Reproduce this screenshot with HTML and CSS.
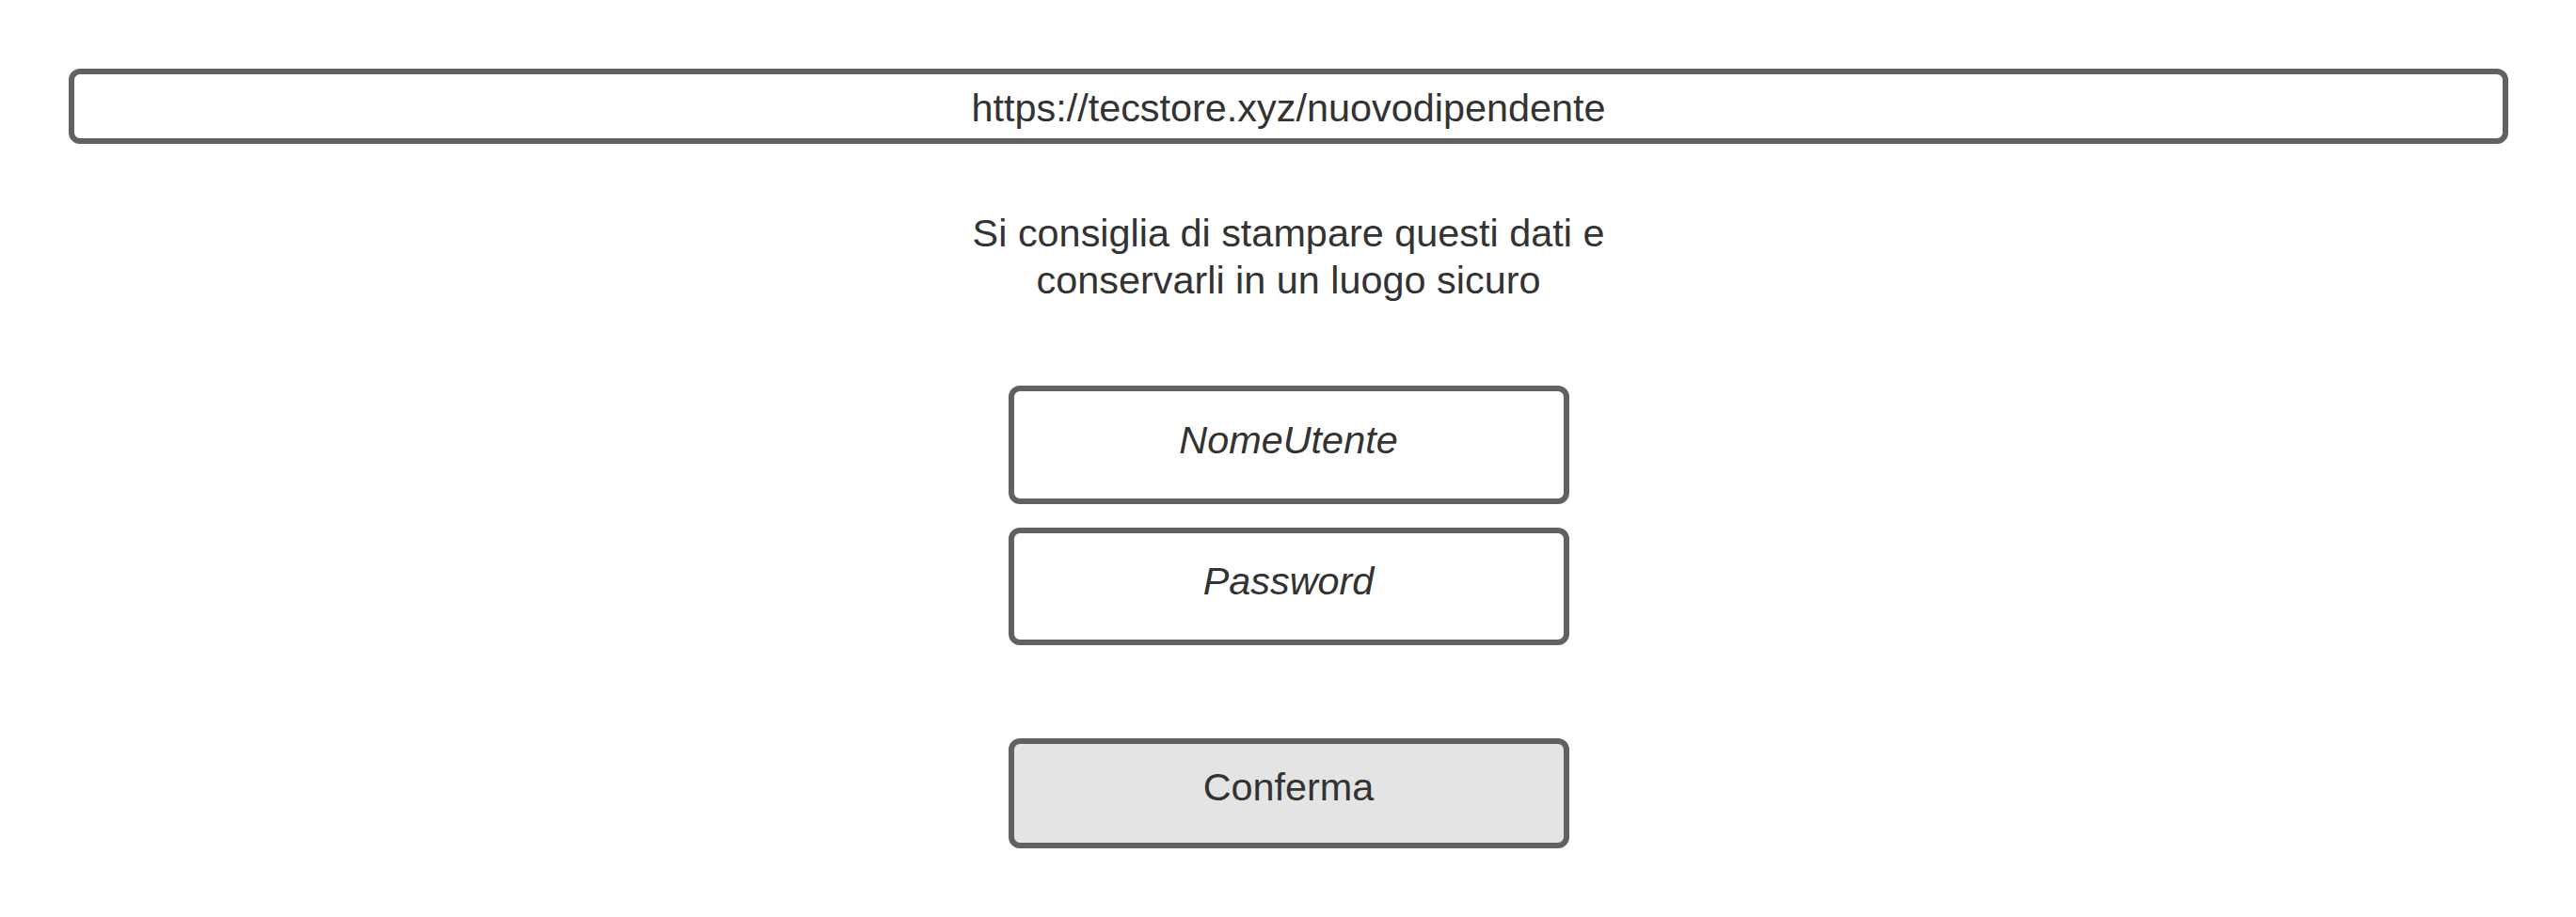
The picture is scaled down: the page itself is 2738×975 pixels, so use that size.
FILE: index.html
```html
<!DOCTYPE html>
<html lang="it">
<head>
<meta charset="utf-8">
<title>Nuovo dipendente</title>
<link rel="stylesheet" href="styles.css">
</head>
<body>
<div class="page">
  <div class="urlbar">https://tecstore.xyz/nuovodipendente</div>
  <p class="note">Si consiglia di stampare questi dati e conservarli in un luogo sicuro</p>
  <div class="field field-user">NomeUtente</div>
  <div class="field field-pass">Password</div>
  <div class="button">Conferma</div>
</div>
</body>
</html>
```

FILE: styles.css
```css
html, body {
  margin: 0;
  padding: 0;
  background: #ffffff;
}

.page {
  width: 2738px;
  height: 975px;
  box-sizing: border-box;
  padding: 73px 72px 0 73px;
  display: flex;
  flex-direction: column;
  align-items: center;
  font-family: "Liberation Sans", Arial, sans-serif;
  font-size: 41.4px;
  line-height: 1.2;
  color: #333333;
}

.urlbar {
  align-self: stretch;
  height: 80px;
  box-sizing: border-box;
  border: 6px solid #616161;
  border-radius: 12px;
  padding-top: 12px;
  text-align: center;
}

.note {
  margin: 71px 0 0 0;
  width: 700px;
  text-align: center;
}

.field,
.button {
  width: 596px;
  box-sizing: border-box;
  border: 6px solid #616161;
  border-radius: 12px;
  text-align: center;
}

.field {
  height: 126px;
  padding-top: 28px;
  font-style: italic;
}

.field-user {
  margin-top: 87px;
}

.field-pass {
  margin-top: 25px;
  height: 125px;
  padding-top: 27px;
}

.button {
  margin-top: 99px;
  height: 117px;
  padding-top: 22px;
  background: #e4e4e4;
}
```
